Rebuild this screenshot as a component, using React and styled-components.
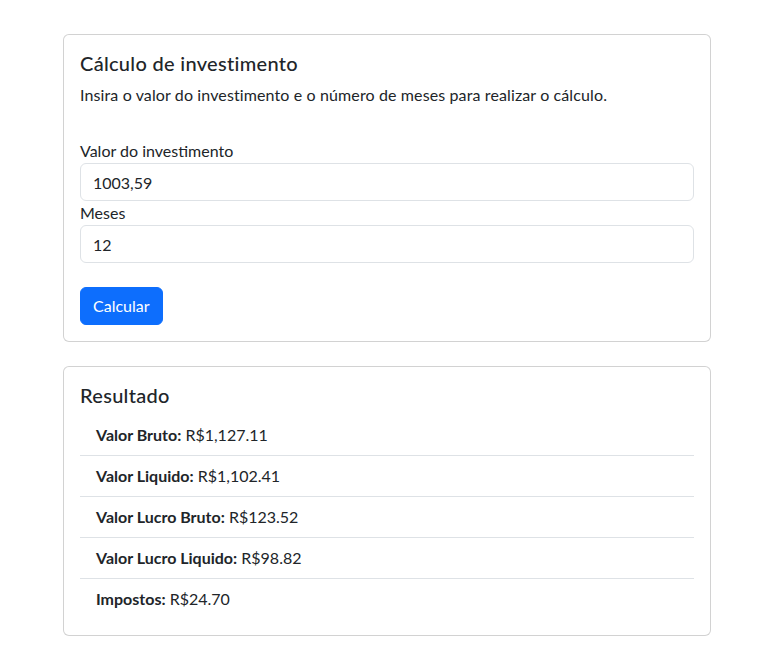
import React from "react";
import styled, { createGlobalStyle } from "styled-components";

const Global = createGlobalStyle`
  * { box-sizing: border-box; }
  body {
    margin: 0;
    background: #fff;
    color: #212529;
    font-family: "Segoe UI", Lato, "Noto Sans", sans-serif;
    font-size: 16px;
    line-height: 1.5;
  }
`;

const Page = styled.main`
  width: 648px;
  margin: 34px 0 0 63px;
  display: flex;
  flex-direction: column;
  gap: 24px;
`;

const Card = styled.section`
  border: 1px solid rgba(0, 0, 0, 0.175);
  border-radius: 6px;
  background: #fff;
`;

const CardBody = styled.div`
  padding: 16px;
`;

const Title = styled.h5`
  margin: 0 0 8px;
  font-size: 20px;
  font-weight: 500;
  line-height: 1.2;
  letter-spacing: 0.3px;
`;

const Text = styled.p`
  margin: 0 0 32px;
  letter-spacing: 0.12px;
`;

const Form = styled.form`
  display: flex;
  flex-direction: column;
`;

const Label = styled.label`
  display: block;
`;

const Input = styled.input`
  display: block;
  width: 100%;
  height: 38px;
  padding: 6px 12px;
  font: inherit;
  color: #212529;
  border: 1px solid #dee2e6;
  border-radius: 6px;
  outline: none;
`;

const Button = styled.button`
  align-self: flex-start;
  margin-top: 24px;
  height: 38px;
  padding: 6px 12px;
  font: inherit;
  color: #fff;
  background: #0d6efd;
  border: 1px solid #0d6efd;
  border-radius: 6px;
`;

const List = styled.ul`
  list-style: none;
  margin: 0;
  padding: 0;
`;

const Item = styled.li`
  padding: 8px 16px;
  & + & {
    border-top: 1px solid #dee2e6;
  }
`;

const rows = [
  ["Valor Bruto:", "R$1,127.11"],
  ["Valor Liquido:", "R$1,102.41"],
  ["Valor Lucro Bruto:", "R$123.52"],
  ["Valor Lucro Liquido:", "R$98.82"],
  ["Impostos:", "R$24.70"],
];

export default function App() {
  return (
    <>
      <Global />
      <Page>
        <Card>
          <CardBody>
            <Title>Cálculo de investimento</Title>
            <Text>Insira o valor do investimento e o número de meses para realizar o cálculo.</Text>
            <Form onSubmit={(e) => e.preventDefault()}>
              <Label htmlFor="valor">Valor do investimento</Label>
              <Input id="valor" defaultValue="1003,59" />
              <Label htmlFor="meses">Meses</Label>
              <Input id="meses" defaultValue="12" />
              <Button type="submit">Calcular</Button>
            </Form>
          </CardBody>
        </Card>
        <Card>
          <CardBody>
            <Title>Resultado</Title>
            <List>
              {rows.map(([k, v]) => (
                <Item key={k}>
                  <strong>{k}</strong> {v}
                </Item>
              ))}
            </List>
          </CardBody>
        </Card>
      </Page>
    </>
  );
}
